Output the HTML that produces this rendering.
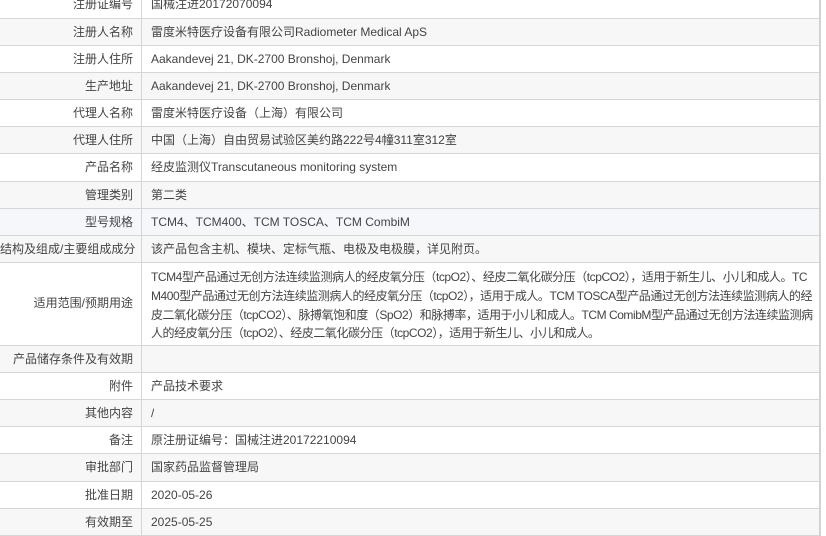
<!DOCTYPE html>
<html><head><meta charset="utf-8"><style>
html,body{margin:0;padding:0;background:#fff;width:826px;height:536px;overflow:hidden}
body{font-family:"Liberation Sans","Noto Sans CJK SC",sans-serif;font-size:12px;color:#444}
.t{position:absolute;left:0;top:-8.7px;width:819px;border-right:2px solid #d2d2d2}
.r{display:flex;height:27.2px;border-bottom:1px solid #d6d6d6;box-sizing:border-box;background:#fff}
.r.g{background:#f7f7f7}
.r.b{background:#f5f7fb}
.l{width:142px;box-sizing:border-box;border-right:1px solid #d6d6d6;text-align:right;padding-right:8px;line-height:26px;white-space:nowrap;flex:none}
.v{padding-left:9px;line-height:26px;white-space:nowrap;overflow:hidden}
.r.tall{height:82.5px}
.r.tall .l{line-height:81px}
.r.tall .v{line-height:18.7px;padding-top:5px;letter-spacing:-0.45px}
</style></head><body>
<div class="t">
<div class="r"><div class="l">注册证编号</div><div class="v">国械注进20172070094</div></div>
<div class="r g"><div class="l">注册人名称</div><div class="v">雷度米特医疗设备有限公司Radiometer Medical ApS</div></div>
<div class="r"><div class="l">注册人住所</div><div class="v">Aakandevej 21, DK-2700 Bronshoj, Denmark</div></div>
<div class="r g"><div class="l">生产地址</div><div class="v">Aakandevej 21, DK-2700 Bronshoj, Denmark</div></div>
<div class="r"><div class="l">代理人名称</div><div class="v">雷度米特医疗设备（上海）有限公司</div></div>
<div class="r g"><div class="l">代理人住所</div><div class="v">中国（上海）自由贸易试验区美约路222号4幢311室312室</div></div>
<div class="r"><div class="l">产品名称</div><div class="v">经皮监测仪Transcutaneous monitoring system</div></div>
<div class="r g"><div class="l">管理类别</div><div class="v">第二类</div></div>
<div class="r b"><div class="l">型号规格</div><div class="v">TCM4、TCM400、TCM TOSCA、TCM CombiM</div></div>
<div class="r g"><div class="l">结构及组成/主要组成成分</div><div class="v">该产品包含主机、模块、定标气瓶、电极及电极膜，详见附页。</div></div>
<div class="r tall"><div class="l">适用范围/预期用途</div><div class="v">TCM4型产品通过无创方法连续监测病人的经皮氧分压（tcpO2）、经皮二氧化碳分压（tcpCO2），适用于新生儿、小儿和成人。TC<br>M400型产品通过无创方法连续监测病人的经皮氧分压（tcpO2），适用于成人。TCM TOSCA型产品通过无创方法连续监测病人的经<br>皮二氧化碳分压（tcpCO2）、脉搏氧饱和度（SpO2）和脉搏率，适用于小儿和成人。TCM ComibM型产品通过无创方法连续监测病<br>人的经皮氧分压（tcpO2）、经皮二氧化碳分压（tcpCO2），适用于新生儿、小儿和成人。</div></div>
<div class="r g"><div class="l">产品储存条件及有效期</div><div class="v"></div></div>
<div class="r"><div class="l">附件</div><div class="v">产品技术要求</div></div>
<div class="r g"><div class="l">其他内容</div><div class="v">/</div></div>
<div class="r"><div class="l">备注</div><div class="v">原注册证编号：国械注进20172210094</div></div>
<div class="r g"><div class="l">审批部门</div><div class="v">国家药品监督管理局</div></div>
<div class="r"><div class="l">批准日期</div><div class="v">2020-05-26</div></div>
<div class="r g"><div class="l">有效期至</div><div class="v">2025-05-25</div></div>
</div>
</body></html>
